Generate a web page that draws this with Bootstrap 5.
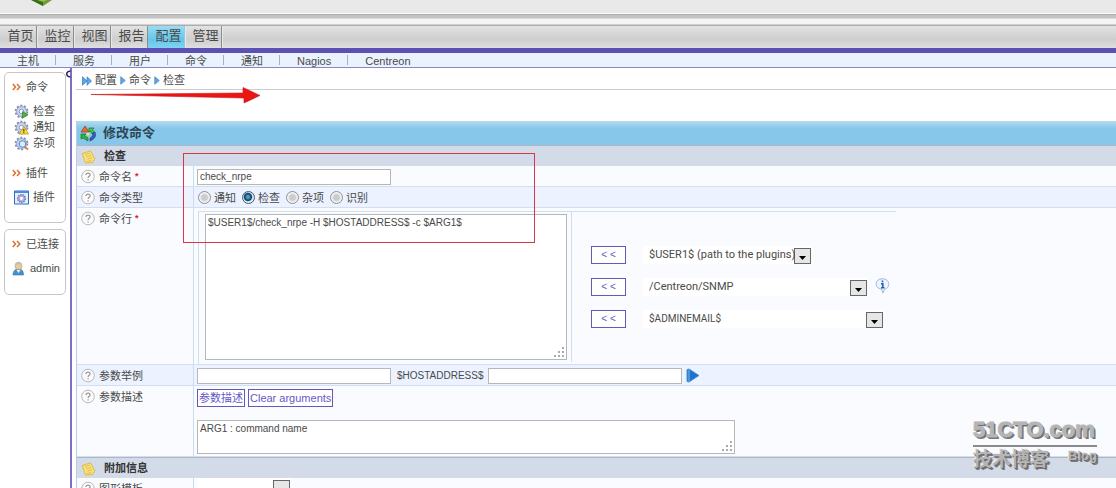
<!DOCTYPE html>
<html lang="zh-CN">
<head>
<meta charset="utf-8">
<meta name="viewport" content="width=device-width, initial-scale=1">
<title>Centreon - 修改命令</title>
<link href="https://cdn.jsdelivr.net/npm/bootstrap@5.3.0/dist/css/bootstrap.min.css" rel="stylesheet">
<style>
  body{font-family:"Liberation Sans","Noto Sans CJK SC",sans-serif;font-size:11px;line-height:16px;color:#4a4a4a;background:#fff}
  a{color:inherit;text-decoration:none}
  svg{display:block;flex:none}
  .topbar{height:26px;background:linear-gradient(#e9e9e9 0 13px,#fcfcfc 13px 14px,#adadad 14px 15px,#c4c4c4 15px 18px,#f4f4f4 19px 24px,#adadad 25px 26px);padding-left:31px}
  .mainnav{height:22px;background:linear-gradient(#e2e2e2,#cecece 60%,#dfdfdf);font-size:13px;line-height:20px}
  .mainnav a{width:37px;padding-left:5px;text-align:center;border-right:1px solid #8c8c8c;box-shadow:1px 0 #e8e8e8;color:#4a4a4a}
  .mainnav a.current{background:linear-gradient(#9adcf3,#64c6ea 60%,#80d4f0);border-color:#8fcbe2}
  .subnav{height:20px;background:#eaf3fd;border-top:5px solid #5c50b5;border-bottom:1px solid #8589c9;padding-left:17px}
  .subnav a{padding-right:16px;margin-right:17px;border-right:1px solid #a9b0bd;line-height:12px;margin-top:2px;height:10px}
  .subnav a:last-child{border:0}
  .sidebar{width:72px;border-right:2px solid #7b70c5;padding:4px 4px 0}
  .knob{left:65px;top:2px}
  .panelbox{border:1px solid #c6c6c6;border-radius:5px;margin-bottom:6px;padding:6px 0 0 7px}
  .panelbox h2{font-size:11px;font-weight:400;line-height:16px;margin:0;gap:5px}
  .panelbox ul{margin:8px 0 0;padding:0;list-style:none}
  .panelbox li a{gap:4px;height:16px;padding-left:2px}
  .box-menu{height:151px}
  .box-user{height:66px}
  .plugins h2{margin-top:14px}
  .crumbs{height:22px;border-bottom:1px solid #ccc;padding:4px 0 0 6px;gap:3px}
  .arrowmark{left:13px;top:19px}
  .formarea{margin-top:31px;border-left:1px solid #b9cde6}
  .titlebar{height:24px;font-size:13px;font-weight:700;background:linear-gradient(#b4daf0,#87c8ea 30%,#87c8ea);padding-left:3px;gap:6px;color:#2e4654;margin:0}
  .sectionbar{height:21px;font-size:11px;font-weight:700;background:#d4dbe8;border-top:1px solid #adb6c4;padding:1px 0 0 4px;gap:8px;color:#333;margin:0}
  .field{background:#f9fbff;min-height:21px;border-bottom:1px solid #d3dfee}
  .field.alt{background:#ecf2ff}
  .fieldname{width:117px;border-right:1px solid #cbdcf0;padding:3px 0 0 4px;gap:4px;flex:none}
  .fieldname b{color:#e02020;font-size:9px;margin-left:-1px;line-height:14px}
  .fieldbody{padding-left:3px;min-width:0}
  .lineup{padding-top:1px}
  .entry{border:1px solid #b4b8b8;background:#fff;color:#4a4a4a;padding:0 2px;font-size:10px;border-radius:0;outline:0}
  input.entry{width:194px;height:16px}
  textarea.entry{resize:none;display:block;line-height:14px;padding:1px 2px;overflow:hidden}
  .cmdtext{width:362px;height:146px}
  .argtext{width:538px;height:34px}
  .argbody{padding-top:3px;padding-bottom:2px}
  .argbody .argtext{margin-top:13px}
  .argbody textarea.argtext{margin-top:0}
  .btnpair{gap:3px}
  .hostlabel{font-size:10px;padding:0 4px 0 6px}
  .grip{right:2px;bottom:2px;pointer-events:none}
  .choices{gap:6px;padding-left:4px}
  .choices label{gap:3px;line-height:18px}
  input[type=radio]{appearance:none;width:13px;height:13px;margin:0 0 1px;border:1px solid #8e9194;border-radius:50%;background:radial-gradient(circle,#c9cdd0 35%,#f3f3f3 60%)}
  input[type=radio]:checked{background:radial-gradient(circle at 45% 45%,#4f9fcc 0 12%,#123c60 42%,#dde8f0 55%);border-color:#3d5e7a}
  .cmdgrid{border-left:1px solid #d0dff0;border-top:1px solid #d0dff0;width:698px;height:153px;margin:3px 0 0 1px}
  .cmdcell{padding:2px 4px 0 6px;border-right:1px solid #d0dff0;width:373px;height:150px}
  .macros{padding:34px 0 0 19px}
  .macros>div{height:18px;margin-bottom:14px}
  .linkbtn{border:1px solid #6558b8;background:#fff;color:#6558c8;height:18px;line-height:14px;padding:0 1px;font-size:11px}
  .shift{width:35px;margin-right:17px;font-size:10px}
  .pick{appearance:none;border:0;border-radius:0;height:18px;padding:0 0 0 6px;color:#4a4a4a;font-family:Roboto,"Liberation Sans",sans-serif;font-size:11px;line-height:16px;outline:0;background:#fff url("data:image/svg+xml,%3Csvg xmlns='http://www.w3.org/2000/svg' width='17' height='16'%3E%3Crect x='.5' y='.5' width='16' height='15' fill='%23e6e6e6' stroke='%23666'/%3E%3Cpath d='M5 8h7l-3.500 4z' fill='%23000'/%3E%3C/svg%3E") no-repeat right bottom}
  .pick-a{width:168px}.pick-b{width:224px}.pick-c{width:240px;font-size:10px}.pick-d{width:93px}
  .redframe{left:106px;top:32px;width:352px;height:90px;border:1px solid #dc3545;pointer-events:none}
  .stamp{right:19px;bottom:15px;width:124px;color:#b5b5b5;text-shadow:1px 1px #6d6d6d,2px 2px #777,-1px -1px #eee;pointer-events:none}
  .stamp-top{font:700 22px/30px "Liberation Sans",sans-serif;-webkit-text-stroke:1px #b5b5b5;border-bottom:2px solid #8a8a8a;white-space:nowrap}
  .stamp-cn{font-size:19px;line-height:26px;font-weight:700}
  .stamp-en{font-size:13px;line-height:18px;font-weight:700}
</style>
<script src="https://cdn.jsdelivr.net/npm/bootstrap@5.3.0/dist/js/bootstrap.bundle.min.js"></script>
</head>
<body>
<svg width="0" height="0" class="position-absolute" aria-hidden="true">
  <symbol id="help" viewBox="0 0 14 14"><circle cx="7" cy="7" r="6.300" fill="#fbfbfb" stroke="#b9b9b9"/><path d="M5 5.400C5 2.900 9.200 3 9.100 5.400 9 6.800 7.100 6.900 7.100 8.500M7.100 9.700v1.200" fill="none" stroke="#999" stroke-width="1.200"/></symbol>
  <symbol id="tri" viewBox="0 0 6 10"><path d="M.5.8 5.500 5 .5 9.200z" fill="#5da9e4" stroke="#3b83c8" stroke-width=".8"/></symbol>
  <symbol id="chev" viewBox="0 0 9 8"><path d="M.8 1 3.500 4 .8 7M5 1l2.800 3L5 7" fill="none" stroke="#de6f31" stroke-width="1.500"/></symbol>
  <symbol id="gear" viewBox="0 0 16 16"><circle cx="8" cy="8" r="6.300" fill="none" stroke="#8290b9" stroke-width="2" stroke-dasharray="2.200 1.750"/><circle cx="8" cy="8" r="5.300" fill="#ccd6ef" stroke="#8c9bc6"/><circle cx="8" cy="8" r="2.400" fill="#fff" stroke="#7c8dbd"/></symbol>
  <symbol id="note" viewBox="0 0 14 14"><path d="M.8 3.500 9 .8l4.200 7.500-1.700 4-7.500.9z" fill="#f8e27c" stroke="#dcba49"/><path d="M3.500 4.800 8.700 3M4.700 7l5.200-1.800M5.800 9.300 11 7.500M5 11.500l5-1" stroke="#d9b24a" stroke-width=".8"/></symbol>
  <symbol id="grip" viewBox="0 0 12 11"><path d="M9 0h2v2H9zM9 4h2v2H9zM9 8h2v2H9zM5 4h2v2H5zM5 8h2v2H5zM1 8h2v2H1z" fill="#aaa"/></symbol>
</svg>

<div class="vh-100 overflow-hidden d-flex flex-column position-relative">
  <header>
    <div class="topbar"><svg width="22" height="7" viewBox="0 0 22 7"><path d="M1 0h20l-9 6z" fill="#6f9b3b"/><path d="M0 0h12v6z" fill="#356f18"/><path d="M6 0h10l-4 2z" fill="#99bd52"/></svg></div>
    <nav class="mainnav d-flex">
      <a href="#">首页</a><a href="#">监控</a><a href="#">视图</a><a href="#">报告</a><a href="#" class="current">配置</a><a href="#">管理</a>
    </nav>
    <nav class="subnav d-flex">
      <a href="#">主机</a><a href="#">服务</a><a href="#">用户</a><a href="#">命令</a><a href="#">通知</a><a href="#">Nagios</a><a href="#">Centreon</a>
    </nav>
  </header>

  <div class="d-flex flex-grow-1">
    <aside class="sidebar position-relative flex-shrink-0">
      <svg class="knob position-absolute" width="6" height="8" viewBox="0 0 6 8"><path d="M5.500 1C.5 1.500.5 6.500 5.500 7" fill="none" stroke="#292371" stroke-width="1.500"/></svg>
      <div class="panelbox box-menu">
        <h2 class="d-flex align-items-center"><svg width="9" height="8"><use href="#chev"/></svg>命令</h2>
        <ul>
          <li><a href="#" class="d-flex align-items-center"><svg width="15" height="15" viewBox="0 0 16 16"><use href="#gear"/><path d="M9 8l6 3.500L9 15z" fill="#4fb43e" stroke="#277c27" stroke-width=".7"/></svg>检查</a></li>
          <li><a href="#" class="d-flex align-items-center"><svg width="15" height="15" viewBox="0 0 16 16"><use href="#gear"/><path d="M10.500 6.500 15.500 15h-10z" fill="#ffdc38" stroke="#a68320" stroke-width=".7"/><path d="M10.500 9.500v2.800M10.500 13v1" stroke="#111"/></svg>通知</a></li>
          <li><a href="#" class="d-flex align-items-center"><svg width="15" height="15" viewBox="0 0 16 16"><use href="#gear"/><circle cx="9" cy="8.500" r="3.500" fill="#d8ecfa" stroke="#4c83bf"/><path d="m11.500 11 3.500 3.500" stroke="#d68444" stroke-width="2"/></svg>杂项</a></li>
        </ul>
        <div class="plugins">
          <h2 class="d-flex align-items-center"><svg width="9" height="8"><use href="#chev"/></svg>插件</h2>
          <ul><li><a href="#" class="d-flex align-items-center"><svg width="15" height="15" viewBox="0 0 15 15"><path d="M.5 1h14v13H.5z" fill="#e3effc" stroke="#2d6fbe"/><path d="M1 1h13v2H1z" fill="#4b8fd8"/><circle cx="7.500" cy="8.500" r="3.800" fill="#b3b4dc" stroke="#7577bd" stroke-width="1.500" stroke-dasharray="1.500 .8"/><circle cx="7.500" cy="8.500" r="1.400" fill="#fff"/></svg>插件</a></li></ul>
        </div>
      </div>
      <div class="panelbox box-user">
        <h2 class="d-flex align-items-center"><svg width="9" height="8"><use href="#chev"/></svg>已连接</h2>
        <ul><li><a href="#" class="d-flex align-items-center gap-1 ps-0"><svg width="14" height="15" viewBox="0 0 14 15"><path d="M1 14c0-4 2-6 5.500-6s5 2 5 6z" fill="#4393cf" stroke="#2f73a8" stroke-width=".6"/><path d="m4.500 9 2 3 2-3z" fill="#f2f5f8"/><circle cx="6.500" cy="5" r="3.600" fill="#edca8d" stroke="#b9a582" stroke-width=".6"/><path d="M3 4c.5-4.500 6.500-4.500 7 0-2.500-1-4-1-7 0z" fill="#b6c0c8"/></svg>admin</a></li></ul>
      </div>
    </aside>

    <main class="flex-grow-1 ps-1 position-relative">
      <nav class="crumbs d-flex">
        <svg class="mt-1" width="10" height="10" viewBox="0 0 10 10"><path d="M.5.8 5 5 .5 9.200zM5 .8 9.500 5 5 9.200z" fill="#5da9e4" stroke="#3b83c8" stroke-width=".8"/></svg>
        <a href="#">配置</a><svg class="mt-1" width="6" height="9"><use href="#tri"/></svg>
        <a href="#">命令</a><svg class="mt-1" width="6" height="9"><use href="#tri"/></svg>
        <a href="#">检查</a>
      </nav>
      <svg class="arrowmark position-absolute ms-1" width="172" height="17" viewBox="0 0 172 17"><path d="M2 7.500 154 6V.5L171 8.500 155 16v-5z" fill="#ed1414" stroke="#c91616" stroke-width=".6"/></svg>

      <form class="formarea position-relative" onsubmit="return false">
        <h1 class="titlebar d-flex align-items-center"><svg width="17" height="17" viewBox="0 0 17 17"><path d="M5 1 9 7H1z" fill="#e36a31" stroke="#923f22" stroke-width=".7"/><path d="M1 9h5L4.500 10.500 8 13v3l-5-3-2 1z" fill="#2bb53e" stroke="#147329" stroke-width=".7"/><path d="M9 3h5l-1.500 1.800L15 8l-3 1-1.500-3L9 7z" fill="#49c34d" stroke="#147329" stroke-width=".7"/><path d="M15 7c1.500 4 0 7-5 9v-3c2.500-1 3-3 2.500-5z" fill="#345fb5" stroke="#253c78" stroke-width=".6"/><circle cx="8" cy="9" r="1.500" fill="#f5e65a"/></svg>修改命令</h1>
        <h2 class="sectionbar d-flex align-items-center"><svg width="15" height="14"><use href="#note"/></svg>检查</h2>

        <div class="field d-flex">
          <label class="fieldname d-flex" for="cmdname"><svg width="14" height="15"><use href="#help"/></svg>命令名<b>*</b></label>
          <div class="fieldbody lineup d-flex align-items-center"><input id="cmdname" class="entry" type="text" value="check_nrpe"></div>
        </div>
        <div class="field alt d-flex">
          <div class="fieldname d-flex"><svg width="14" height="15"><use href="#help"/></svg>命令类型</div>
          <div class="fieldbody lineup choices d-flex align-items-center">
            <label class="d-flex align-items-center"><input type="radio" name="kind">通知</label>
            <label class="d-flex align-items-center"><input type="radio" name="kind" checked>检查</label>
            <label class="d-flex align-items-center"><input type="radio" name="kind">杂项</label>
            <label class="d-flex align-items-center"><input type="radio" name="kind">识别</label>
          </div>
        </div>
        <div class="field d-flex">
          <label class="fieldname d-flex" for="cmdline"><svg width="14" height="15"><use href="#help"/></svg>命令行<b>*</b></label>
          <div class="fieldbody">
            <div class="cmdgrid d-flex">
              <div class="cmdcell flex-shrink-0"><div class="position-relative cmdtext"><textarea id="cmdline" class="entry cmdtext">$USER1$/check_nrpe -H $HOSTADDRESS$ -c $ARG1$</textarea><svg class="grip position-absolute" width="12" height="11"><use href="#grip"/></svg></div></div>
              <div class="macros">
                <div class="d-flex"><button class="linkbtn shift" type="button">&lt; &lt;</button><select class="pick pick-a" aria-label="资源"><option>$USER1$ (path to the plugins)</option></select></div>
                <div class="d-flex"><button class="linkbtn shift" type="button">&lt; &lt;</button><select class="pick pick-b" aria-label="插件"><option>/Centreon/SNMP</option></select><svg class="ms-2" width="15" height="16" viewBox="0 0 15 16"><path d="M7 .8c8-.6 9 9 2.500 10.500L8 15l-1.500-3.800C-1 10-.5 1 7 .8z" fill="#edf3ff" stroke="#a5b6d9"/><path d="M7.500 2.500v1.800M6 5.800h1.800v4M6 9.800h3.500" fill="none" stroke="#1d63bb" stroke-width="1.600"/></svg></div>
                <div class="d-flex"><button class="linkbtn shift" type="button">&lt; &lt;</button><select class="pick pick-c" aria-label="宏"><option>$ADMINEMAIL$</option></select></div>
              </div>
            </div>
          </div>
        </div>
        <div class="field alt d-flex">
          <label class="fieldname d-flex" for="argsample"><svg width="14" height="15"><use href="#help"/></svg>参数举例</label>
          <div class="fieldbody lineup d-flex align-items-center">
            <input id="argsample" class="entry" type="text"><label class="hostlabel" for="hostaddr">$HOSTADDRESS$</label><input id="hostaddr" class="entry" type="text">
            <button class="border-0 bg-transparent p-0 ms-1" type="button" aria-label="运行"><svg width="14" height="15" viewBox="0 0 14 15"><path d="M1 1.500 3 1l10 6.500L3 14l-2-.5z" fill="#1c73cf" stroke="#4c92d8"/><path d="M3 2v11" stroke="#84b9ec"/></svg></button>
          </div>
        </div>
        <div class="field d-flex">
          <label class="fieldname d-flex" for="argdesc"><svg width="14" height="15"><use href="#help"/></svg>参数描述</label>
          <div class="fieldbody argbody">
            <div class="d-flex btnpair"><button class="linkbtn" type="button">参数描述</button><button class="linkbtn" type="button">Clear arguments</button></div>
            <div class="position-relative argtext"><textarea id="argdesc" class="entry argtext">ARG1 : command name</textarea><svg class="grip position-absolute" width="12" height="11"><use href="#grip"/></svg></div>
          </div>
        </div>
        <h2 class="sectionbar d-flex align-items-center"><svg width="15" height="14"><use href="#note"/></svg>附加信息</h2>
        <div class="field d-flex">
          <label class="fieldname d-flex" for="graph"><svg width="14" height="15"><use href="#help"/></svg>图形模板</label>
          <div class="fieldbody"><select id="graph" class="pick pick-d"><option></option></select></div>
        </div>
        <div class="redframe position-absolute"></div>
      </form>
    </main>
  </div>

  <div class="stamp position-absolute">
    <div class="stamp-top">51CTO.com</div>
    <div class="d-flex justify-content-between"><span class="stamp-cn">技术博客</span><span class="stamp-en">Blog</span></div>
  </div>
</div>
</body>
</html>
